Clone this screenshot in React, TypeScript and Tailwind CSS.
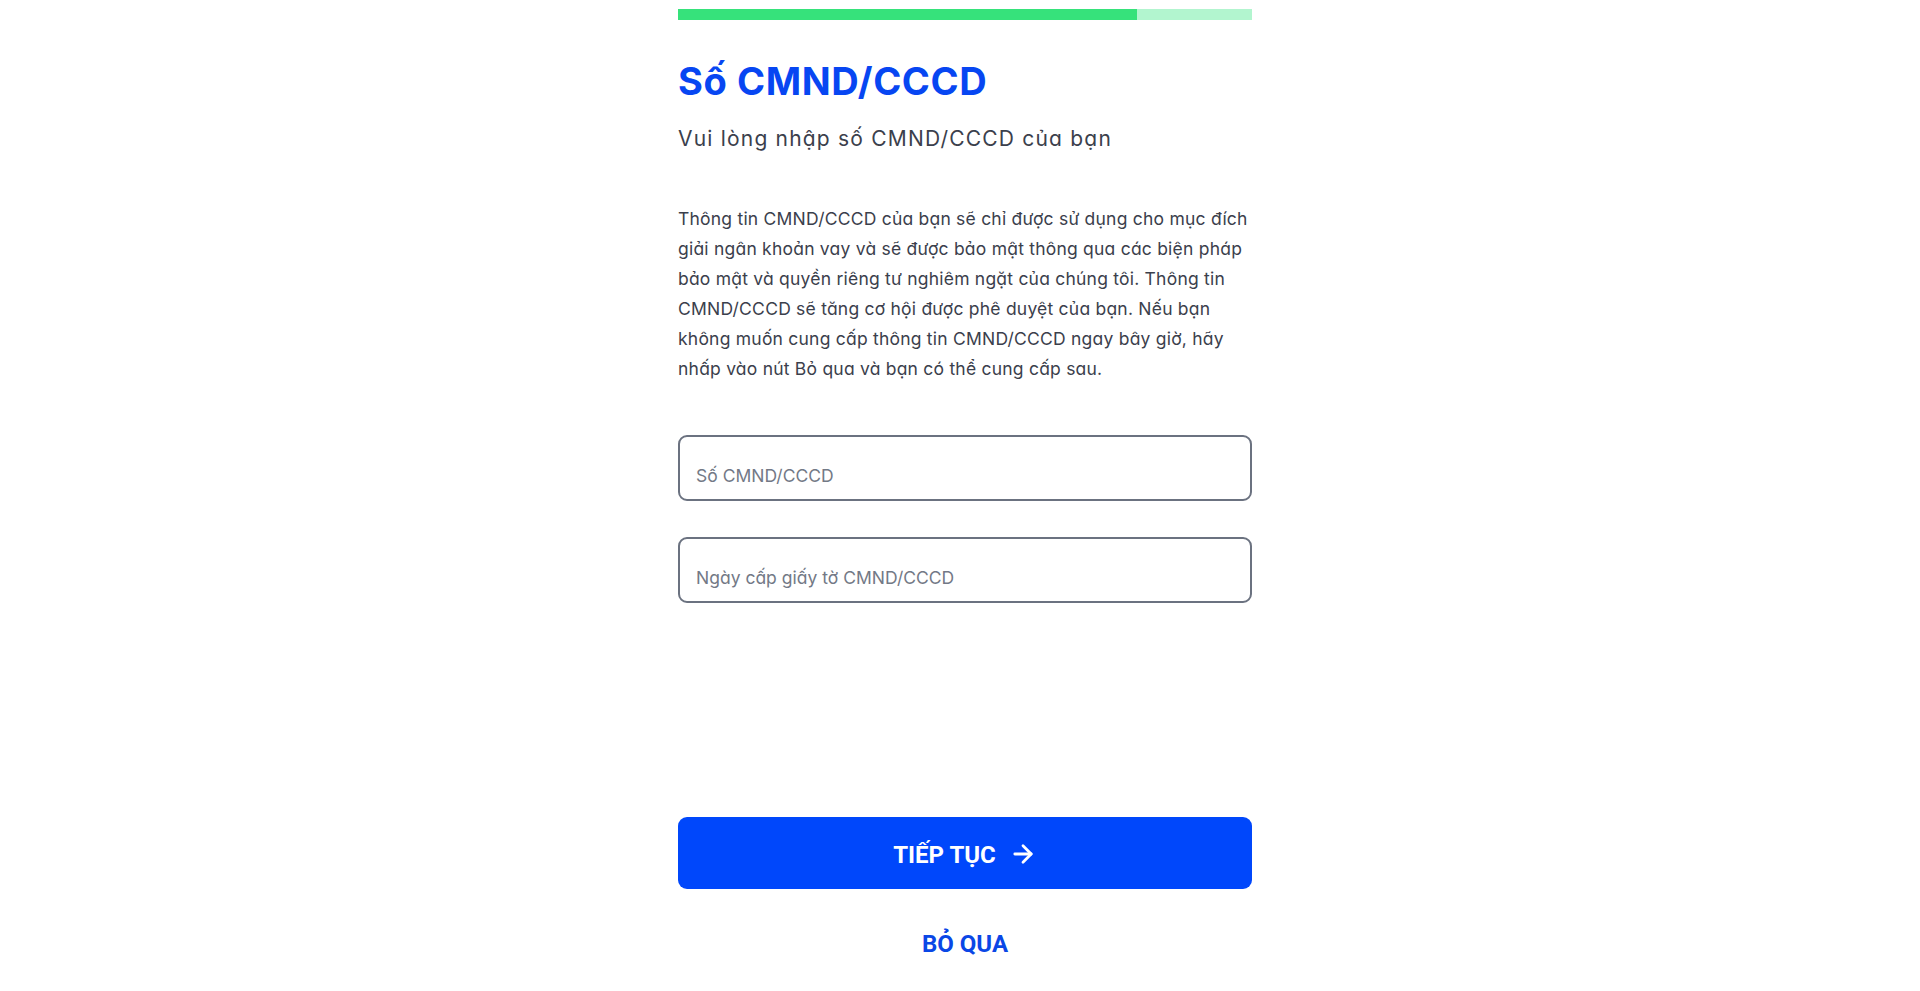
import React from "react";
import { ArrowRight } from "lucide-react";

export default function App() {
  return (
    <div className="min-h-[991px] w-full bg-white flex justify-center pl-[10px] font-['Inter','Noto_Sans',sans-serif] [font-feature-settings:'cv11']">
      <div className="w-[574px] flex flex-col">
        <div className="mt-[9px] h-[11px] flex bg-[#b2f5cf]">
          <div className="w-4/5 h-full bg-[#36e27b]" />
        </div>

        <h1 className="mt-[40px] text-[38px] leading-[43px] font-bold text-[#0746f2] tracking-[0.6px]">
          Số CMND/CCCD
        </h1>
        <p className="mt-[22px] text-[21px] leading-[28px] text-[#3b404c] tracking-[1.2px]">
          Vui lòng nhập số CMND/CCCD của bạn
        </p>

        <p className="mt-[51px] text-[17.5px] leading-[30px] text-[#3b404c] tracking-[0.22px] whitespace-nowrap">
          Thông tin CMND/CCCD của bạn sẽ chỉ được sử dụng cho mục đích
          <br />
          giải ngân khoản vay và sẽ được bảo mật thông qua các biện pháp
          <br />
          bảo mật và quyền riêng tư nghiêm ngặt của chúng tôi. Thông tin
          <br />
          CMND/CCCD sẽ tăng cơ hội được phê duyệt của bạn. Nếu bạn
          <br />
          không muốn cung cấp thông tin CMND/CCCD ngay bây giờ, hãy
          <br />
          nhấp vào nút Bỏ qua và bạn có thể cung cấp sau.
        </p>

        <input
          type="text"
          placeholder="Số CMND/CCCD"
          className="mt-[51px] h-[66px] w-full rounded-[9px] border-2 border-[#6b7280] px-[16px] pt-[15px] text-[17.5px] text-[#374151] placeholder:text-[#737986] outline-none"
        />
        <input
          type="text"
          placeholder="Ngày cấp giấy tờ CMND/CCCD"
          className="mt-[36px] h-[66px] w-full rounded-[9px] border-2 border-[#6b7280] px-[16px] pt-[15px] text-[17.5px] text-[#374151] placeholder:text-[#737986] outline-none"
        />

        <button className="mt-[214px] h-[72px] w-full rounded-[9px] bg-[#0047fb] flex items-center justify-center gap-[13px] pt-[4px] text-white font-['Roboto',sans-serif] font-bold text-[24px] [font-feature-settings:normal]">
          <span>TIẾP TỤC</span>
          <ArrowRight className="w-[28px] h-[28px] -mt-[3px]" strokeWidth={2.4} />
        </button>

        <button className="mt-[39px] h-[32px] self-center text-[#0a47e6] font-['Roboto',sans-serif] font-bold text-[24px] leading-[32px] [font-feature-settings:normal]">
          BỎ QUA
        </button>
      </div>
    </div>
  );
}
